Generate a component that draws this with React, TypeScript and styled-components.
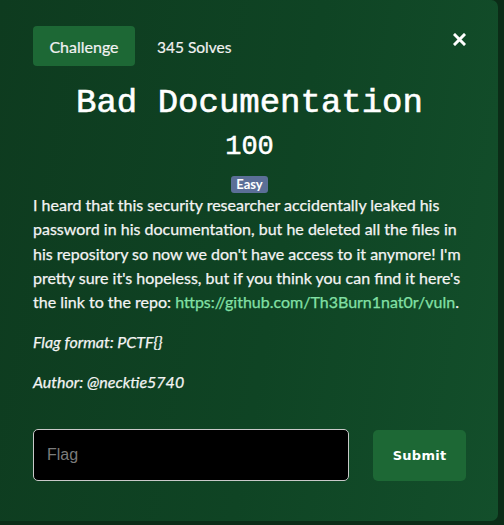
import React from "react";
import styled, { createGlobalStyle } from "styled-components";

const Global = createGlobalStyle`
  html, body { margin: 0; padding: 0; background: #0a2a15; }
  body { width: 504px; height: 525px; overflow: hidden; }
`;

const Backdrop = styled.div`
  width: 504px;
  height: 525px;
  background: #0b2c17;
  display: flex;
  align-items: flex-start;
`;

const Card = styled.div`
  box-sizing: border-box;
  width: 498px;
  height: 521px;
  border-radius: 0 7px 7px 0;
  background: linear-gradient(100deg, #0e3b1f 0%, #0f4424 55%, #134f2b 100%);
  padding: 26px 32px 0 33px;
  color: #f4f4f4;
  font-family: Lato, "Open Sans", sans-serif;
  display: flex;
  flex-direction: column;
`;

const TopBar = styled.div`
  display: flex;
  align-items: center;
  height: 40px;
`;

const Tab = styled.div`
  box-sizing: border-box;
  width: 102px;
  height: 40px;
  border-radius: 4px;
  background: #1d6835;
  display: flex;
  align-items: center;
  justify-content: center;
  font-size: 16px;
  color: #f2f2f2;
  -webkit-text-stroke: 0.2px #f2f2f2;
`;

const Solves = styled.span`
  margin-left: 22px;
  font-size: 15.5px;
  color: #f2f2f2;
  padding-top: 2px;
  -webkit-text-stroke: 0.2px #f2f2f2;
`;

const Close = styled.button`
  margin-left: auto;
  margin-top: -14px;
  background: none;
  border: none;
  padding: 0;
  width: 14px;
  height: 14px;
  display: flex;
  align-items: center;
  justify-content: center;
`;

const Title = styled.h1`
  margin: 19px 0 0;
  text-align: center;
  font-family: "Liberation Mono", "DejaVu Sans Mono", monospace;
  font-weight: 400;
  font-size: 34px;
  line-height: 36px;
  color: #ffffff;
  -webkit-text-stroke: 0.6px #ffffff;
`;

const Points = styled.div`
  margin-top: 9px;
  text-align: center;
  font-family: "Liberation Mono", "DejaVu Sans Mono", monospace;
  font-size: 27px;
  line-height: 34px;
  color: #ffffff;
  -webkit-text-stroke: 0.5px #ffffff;
`;

const BadgeRow = styled.div`
  display: flex;
  justify-content: center;
  margin-top: 12px;
`;

const Badge = styled.span`
  background: #5b6f97;
  color: #ffffff;
  font-weight: 700;
  font-size: 13px;
  line-height: 17px;
  padding: 0 5px;
  border-radius: 3px;
`;

const Description = styled.p`
  margin: 0;
  font-size: 16px;
  line-height: 24.3px;
  color: #f4f4f4;
  -webkit-text-stroke: 0.25px #f4f4f4;
`;

const Link = styled.a`
  color: #82e0a5;
  text-decoration: none;
  -webkit-text-stroke: 0.25px #82e0a5;
`;

const Note = styled.p`
  margin: 16px 0 0;
  font-size: 16px;
  line-height: 24px;
  font-style: italic;
  -webkit-text-stroke: 0.25px #f4f4f4;
`;

const FormRow = styled.div`
  display: flex;
  align-items: center;
  margin-top: 35px;
  gap: 24px;
`;

const FlagInput = styled.input`
  box-sizing: border-box;
  width: 317px;
  height: 52px;
  background: #000000;
  border: 1px solid #c9c9c9;
  border-radius: 5px;
  padding: 0 13px;
  color: #ffffff;
  font-family: "Liberation Sans", Arial, sans-serif;
  font-size: 16px;
  outline: none;
  &::placeholder { color: #7b7b7b; }
`;

const Submit = styled.button`
  box-sizing: border-box;
  width: 93px;
  height: 51px;
  border: none;
  border-radius: 5px;
  background: #1d6835;
  color: #ffffff;
  font-family: "DejaVu Sans", Verdana, sans-serif;
  font-weight: 700;
  font-size: 13px;
  letter-spacing: 0.3px;
`;

export default function App() {
  return (
    <>
      <Global />
      <Backdrop>
        <Card>
          <TopBar>
            <Tab>Challenge</Tab>
            <Solves>345 Solves</Solves>
            <Close aria-label="Close">
              <svg width="13" height="13" viewBox="0 0 13 13">
                <path d="M2 2 L11 11 M11 2 L2 11" stroke="#ffffff" strokeWidth="3" strokeLinecap="square" />
              </svg>
            </Close>
          </TopBar>
          <Title>Bad Documentation</Title>
          <Points>100</Points>
          <BadgeRow>
            <Badge>Easy</Badge>
          </BadgeRow>
          <Description>
            I heard that this security researcher accidentally leaked his password in his
            documentation, but he deleted all the files in his repository so now we don't have
            access to it anymore! I'm pretty sure it's hopeless, but if you think you can find it
            here's the link to the repo:{" "}
            <Link href="#">https://github.com/Th3Burn1nat0r/vuln</Link>.
          </Description>
          <Note>Flag format: PCTF{"{}"}</Note>
          <Note>Author: @necktie5740</Note>
          <FormRow>
            <FlagInput placeholder="Flag" />
            <Submit>Submit</Submit>
          </FormRow>
        </Card>
      </Backdrop>
    </>
  );
}
